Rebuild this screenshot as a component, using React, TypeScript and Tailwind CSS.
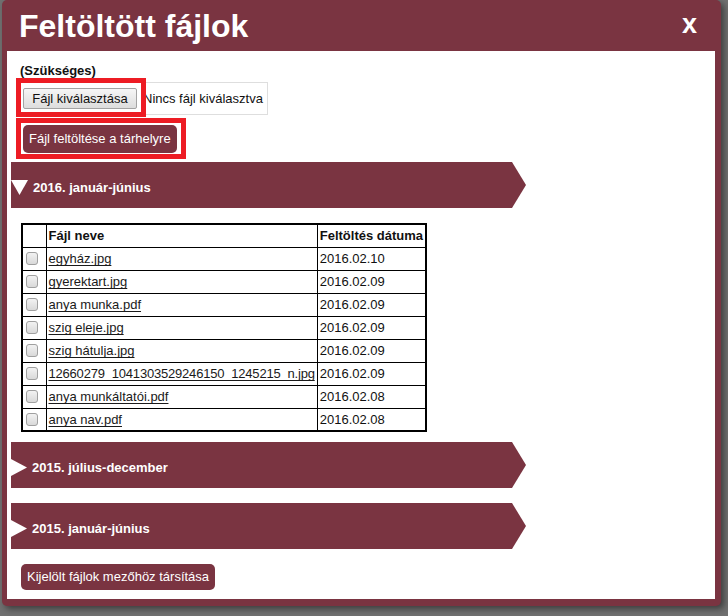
import React from 'react';

const files = [
  { name: 'egyház.jpg', date: '2016.02.10' },
  { name: 'gyerektart.jpg', date: '2016.02.09' },
  { name: 'anya munka.pdf', date: '2016.02.09' },
  { name: 'szig eleje.jpg', date: '2016.02.09' },
  { name: 'szig hátulja.jpg', date: '2016.02.09' },
  { name: '12660279_1041303529246150_1245215_n.jpg', date: '2016.02.09' },
  { name: 'anya munkáltatói.pdf', date: '2016.02.08' },
  { name: 'anya nav.pdf', date: '2016.02.08' },
];

const Section: React.FC<{ title: string; open?: boolean }> = ({ title, open }) => (
  <div className="ml-[4px] w-[515px] h-[46px] bg-[#7a3441] flex items-center pt-[5px] [clip-path:polygon(0_0,501px_0,515px_50%,501px_100%,0_100%)]">
    {open ? (
      <svg width="17" height="15" viewBox="0 0 17 15" className="shrink-0">
        <polygon points="0,0 17,0 8.5,15" fill="#fff" />
      </svg>
    ) : (
      <svg width="16" height="17" viewBox="0 0 16 17" className="shrink-0">
        <polygon points="0,0 16,8.5 0,17" fill="#fff" />
      </svg>
    )}
    <span className="ml-[5px] text-[13px] font-bold text-white">{title}</span>
  </div>
);

const App: React.FC = () => {
  return (
    <div className="w-[728px] h-[616px] bg-[#707070] overflow-hidden font-['Liberation_Sans',Arial,sans-serif]">
      <div className="ml-[2px] w-[719px] h-[606px] bg-[#7a3441] rounded-[5px] flex flex-col pl-[5px] pr-[6px] pb-[7px] shadow-[3px_3px_6px_rgba(0,0,0,0.45)]">
        <div className="h-[51px] shrink-0 flex items-center justify-between pl-[12px] pr-[18px]">
          <h1 className="text-[32px] font-bold text-white leading-none">Feltöltött fájlok</h1>
          <span className="text-[27px] font-bold text-white leading-none pb-[2px]">x</span>
        </div>

        <div className="relative flex-1 bg-white pt-[12px] text-[#111]">
          <div className="ml-[13px] text-[13px] font-bold leading-[15px]">(Szükséges)</div>

          <div className="mt-[4px] ml-[10px] w-[251px] h-[33px] border border-[#dedede] flex items-center pl-[5px]">
            <button className="w-[114px] h-[21px] border border-[#a3a3a3] rounded-[2px] bg-gradient-to-b from-[#f6f6f6] to-[#dddddd] text-[13px] text-[#111] leading-none">
              Fájl kiválasztása
            </button>
            <span className="ml-[6px] text-[13px] text-[#111]">Nincs fájl kiválasztva</span>
          </div>

          <button className="mt-[10px] ml-[16px] h-[28px] px-[6px] rounded-[5px] bg-[#7a3441] text-[13px] text-white block">
            Fájl feltöltése a tárhelyre
          </button>

          <div className="mt-[9px]">
            <Section title="2016. január-június" open />
          </div>

          <table className="mt-[15px] ml-[14px] border-collapse border-2 border-black text-[13px] text-[#111]">
            <thead>
              <tr>
                <th className="border border-black w-[24px] h-[23px] p-0"></th>
                <th className="border border-black w-[270px] h-[23px] px-[2px] text-left font-bold">Fájl neve</th>
                <th className="border border-black w-[108px] h-[23px] px-[2px] text-left font-bold whitespace-nowrap">
                  Feltöltés dátuma
                </th>
              </tr>
            </thead>
            <tbody>
              {files.map((f) => (
                <tr key={f.name}>
                  <td className="border border-black h-[23px] p-0">
                    <div className="ml-[3px] w-[12px] h-[13px] rounded-[3px] border border-[#a0a0a0] bg-gradient-to-b from-[#f2f2f2] to-[#d9d9d9]" />
                  </td>
                  <td className="border border-black h-[23px] px-[2px] whitespace-nowrap">
                    <a
                      href="#"
                      className={
                        'underline underline-offset-[2px] [text-decoration-skip-ink:none] text-[#1a1a1a]' +
                        (f.name.length > 30 ? ' tracking-[-0.2px]' : '')
                      }
                    >
                      {f.name}
                    </a>
                  </td>
                  <td className="border border-black h-[23px] px-[2px] whitespace-nowrap">{f.date}</td>
                </tr>
              ))}
            </tbody>
          </table>

          <div className="mt-[10px]">
            <Section title="2015. július-december" />
          </div>
          <div className="mt-[15px]">
            <Section title="2015. január-június" />
          </div>

          <button className="mt-[15px] ml-[14px] h-[26px] px-[6px] rounded-[5px] bg-[#7a3441] text-[13px] text-white block">
            Kijelölt fájlok mezőhöz társítása
          </button>

          <div className="absolute left-[9px] top-[27px] w-[130px] h-[39px] border-[5px] border-[#ed1c24]" />
          <div className="absolute left-[9px] top-[67px] w-[170px] h-[41px] border-[5px] border-[#ed1c24]" />
        </div>
      </div>
    </div>
  );
};

export default App;
